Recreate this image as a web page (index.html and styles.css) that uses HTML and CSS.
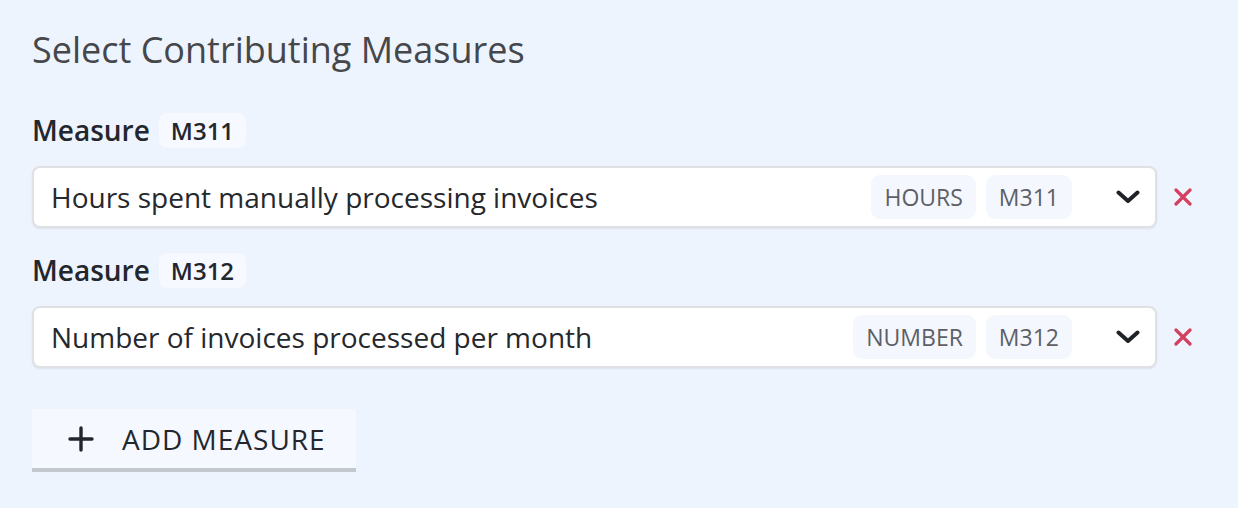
FILE: index.html
```html
<!DOCTYPE html>
<html lang="en">
<head>
	<meta charset="UTF-8">
	<title>Select Contributing Measures</title>
	<link rel="stylesheet" href="styles.css">
</head>
<body>
	<div class="panel">
		<h2 class="title">Select Contributing Measures</h2>

		<div class="measure">
			<div class="measure-label">Measure <span class="code">M311</span></div>
			<div class="measure-row">
				<div class="select">
					<span class="select-text">Hours spent manually processing invoices</span>
					<span class="chip">HOURS</span>
					<span class="chip">M311</span>
					<svg class="chevron" width="24" height="14" viewBox="0 0 24 14"><path d="M2.5 2.5 L12 11 L21.5 2.5" fill="none" stroke="#1f2328" stroke-width="4" stroke-linecap="round" stroke-linejoin="round"/></svg>
				</div>
				<span class="remove"><svg width="18" height="18" viewBox="0 0 18 18"><path d="M2 2 L16 16 M16 2 L2 16" stroke="#d4405f" stroke-width="3.2" stroke-linecap="round"/></svg></span>
			</div>
		</div>

		<div class="measure">
			<div class="measure-label">Measure <span class="code">M312</span></div>
			<div class="measure-row">
				<div class="select">
					<span class="select-text">Number of invoices processed per month</span>
					<span class="chip">NUMBER</span>
					<span class="chip">M312</span>
					<svg class="chevron" width="24" height="14" viewBox="0 0 24 14"><path d="M2.5 2.5 L12 11 L21.5 2.5" fill="none" stroke="#1f2328" stroke-width="4" stroke-linecap="round" stroke-linejoin="round"/></svg>
				</div>
				<span class="remove"><svg width="18" height="18" viewBox="0 0 18 18"><path d="M2 2 L16 16 M16 2 L2 16" stroke="#d4405f" stroke-width="3.2" stroke-linecap="round"/></svg></span>
			</div>
		</div>

		<button class="add-btn">
			<svg width="26" height="26" viewBox="0 0 26 26"><path d="M13 2 V24 M2 13 H24" stroke="#23272d" stroke-width="3.4" stroke-linecap="round"/></svg>
			<span>ADD MEASURE</span>
		</button>
	</div>
</body>
</html>
```

FILE: styles.css
```css
*{
	margin: 0;
	padding: 0;
	box-sizing: border-box;
}
body{
	background: #eef4fe;
	font-family: "Open Sans", "Noto Sans", sans-serif;
	color: #23272d;
}
.panel{
	padding: 28px 46px 0 32px;
}
.title{
	font-size: 36px;
	font-weight: 400;
	color: #45474b;
	line-height: 44px;
	margin-bottom: 41px;
}
.measure{
	margin-bottom: 25px;
}
.measure-label{
	display: flex;
	align-items: center;
	font-size: 28px;
	font-weight: 600;
	line-height: 35px;
	margin-bottom: 18px;
}
.code{
	margin-left: 9px;
	padding: 0 12px;
	height: 35px;
	line-height: 35px;
	font-size: 24px;
	border-radius: 8px;
	background: #f6f9ff;
}
.measure-row{
	display: flex;
	align-items: center;
	gap: 17px;
}
.select{
	flex: 1;
	height: 62px;
	display: flex;
	align-items: center;
	padding: 0 15px 0 17px;
	background: #fff;
	border: 2px solid #dfe1e4;
	border-radius: 8px;
	box-shadow: 0 1px 2px rgba(0,0,0,0.08);
}
.select-text{
	flex: 1;
	font-size: 28px;
	color: #25282c;
}
.chip{
	margin-left: 10px;
	padding: 0 13px;
	height: 44px;
	line-height: 44px;
	font-size: 23px;
	color: #5c6066;
	background: #f4f7fe;
	border-radius: 9px;
}
.chevron{
	margin-left: 44px;
}
.remove{
	width: 18px;
	height: 18px;
	display: flex;
}
.add-btn{
	display: flex;
	align-items: center;
	gap: 28px;
	margin-top: 41px;
	height: 63px;
	padding: 0 30px 0 36px;
	border: none;
	border-bottom: 4px solid #c3c7ce;
	background: #f5f8ff;
	font-family: "Open Sans", "Noto Sans", sans-serif;
	font-size: 28px;
	letter-spacing: 1px;
	color: #23272d;
	cursor: pointer;
}
```
